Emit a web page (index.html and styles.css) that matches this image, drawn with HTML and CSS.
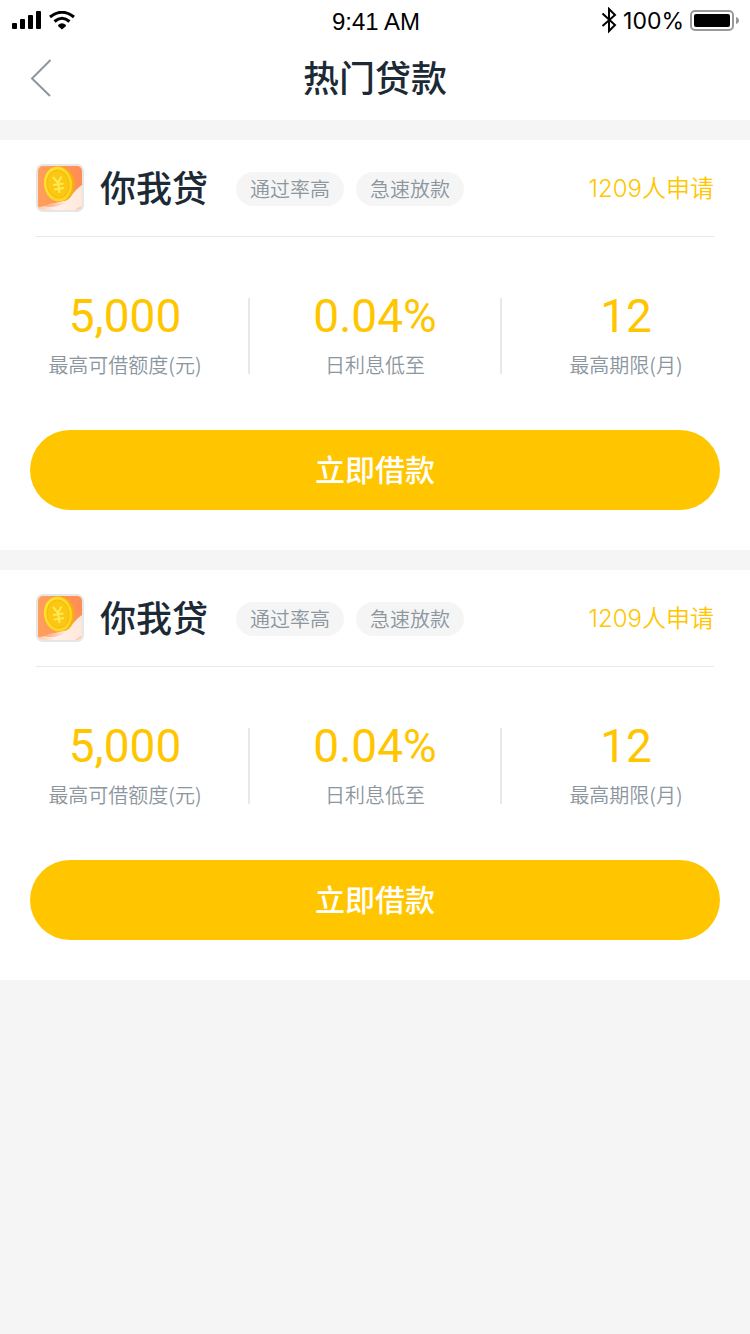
FILE: index.html
```html
<!DOCTYPE html>
<html lang="zh-CN">
<head>
<meta charset="utf-8">
<meta name="viewport" content="width=device-width, initial-scale=1">
<title>热门贷款</title>
<link rel="stylesheet" href="styles.css">
</head>
<body>
<svg class="defs" width="0" height="0" aria-hidden="true">
  <defs>
    <linearGradient id="sky" x1="0" y1="0" x2="1" y2="0">
      <stop offset="0" stop-color="#ffa05c"/><stop offset="1" stop-color="#ff8c54"/>
    </linearGradient>
    <linearGradient id="hill" x1="0" y1="0" x2="1" y2="0">
      <stop offset="0" stop-color="#ffc4a0"/><stop offset="0.4" stop-color="#fff2ea"/><stop offset="1" stop-color="#ffe6d9"/>
    </linearGradient>
    <linearGradient id="shade" x1="0" y1="0" x2="1" y2="0">
      <stop offset="0" stop-color="#ffa274"/><stop offset="1" stop-color="#ffeadf"/>
    </linearGradient>
    <linearGradient id="coin" x1="0" y1="0" x2="1" y2="1">
      <stop offset="0" stop-color="#ffe62c"/><stop offset="1" stop-color="#ffcf22"/>
    </linearGradient>
    <clipPath id="tile"><rect x="1" y="1" width="46" height="46" rx="5"/></clipPath>
    <symbol id="logo" viewBox="0 0 48 48">
      <g clip-path="url(#tile)">
        <rect width="48" height="48" fill="url(#sky)"/>
        <path d="M0 44C12 41 24 39 32 34C38 30 40 24 48 20V48H0Z" fill="url(#hill)"/>
        <path d="M8 42C14 39 22 38 30 38C24 43 14 44 8 42Z" fill="url(#shade)"/>
        <path d="M37 48C40 45 44 42 48 41V48Z" fill="#ffcdb3"/>
      </g>
      <ellipse cx="24.500" cy="20" rx="14" ry="17.500" transform="rotate(-8 24.500 20)" fill="#f7b10b"/>
      <ellipse cx="22" cy="20" rx="14" ry="17.500" transform="rotate(-8 22 20)" fill="url(#coin)"/>
      <ellipse cx="22" cy="20" rx="11" ry="14" transform="rotate(-8 22 20)" fill="#fcc614" stroke="#f5ba0e" stroke-width="1"/>
      <path d="M17 13L22 19L25.500 12.500M22 19L23.500 29M17 21L27.500 19.500M18 25.500L28 24" fill="none" stroke="#ffea50" stroke-width="2"/>
      <rect x="1" y="1" width="46" height="46" rx="6" fill="none" stroke="#e6e6e6" stroke-width="2"/>
    </symbol>
  </defs>
</svg>

<div class="status">
  <div class="status-side">
    <svg width="30" height="22" viewBox="0 0 30 22" aria-hidden="true">
      <rect x="0" y="12" width="5" height="6" rx="1"/><rect x="8" y="8" width="5" height="10" rx="1"/><rect x="16" y="4" width="5" height="14" rx="1"/><rect x="24" y="0" width="5" height="18" rx="1"/>
    </svg>
    <svg width="26" height="22" viewBox="0 0 26 22" aria-hidden="true">
      <g fill="none" stroke="#000" stroke-width="3"><path d="M1 6Q13 -3.500 25 6"/><path d="M5.500 10.500Q13 4 20.500 10.500"/></g>
      <path d="M9 14Q13 10.500 17 14L16.500 15.500L13 18.500L9.500 15.500Z"/>
    </svg>
  </div>
  <time class="clock">9:41 AM</time>
  <div class="status-side status-right">
    <svg width="16" height="30" viewBox="0 0 16 30" aria-hidden="true"><path d="M1.500 6.500L14 18L8 24V2L14 8L1.500 19" fill="none" stroke="#000" stroke-width="2"/></svg>
    <span class="percent">100%</span>
    <svg width="50" height="24" viewBox="0 0 50 24" aria-hidden="true">
      <rect x="1" y="1" width="42" height="19" rx="4" fill="none" stroke="#999" stroke-width="2"/><rect x="4" y="4" width="36" height="13" rx="2"/><path d="M46 7Q49 8 49 10.500T46 14Z" fill="#999"/>
    </svg>
  </div>
</div>

<header class="nav">
  <button class="back" type="button" aria-label="返回">
    <svg width="22" height="38" viewBox="0 0 22 38" aria-hidden="true"><path d="M20.500 1L2 19.500L20 37" fill="none" stroke="#8b969e" stroke-width="2"/></svg>
  </button>
  <h1 class="title">热门贷款</h1>
</header>

<main class="list">
  <article class="card">
    <div class="card-head">
      <svg class="logo" viewBox="0 0 48 48" aria-hidden="true"><use href="#logo"/></svg>
      <h2 class="name">你我贷</h2>
      <span class="tag">通过率高</span><span class="tag">急速放款</span>
      <span class="applied">1209人申请</span>
    </div>
    <dl class="stats">
      <div class="stat"><dd class="value">5,000</dd><dt class="label">最高可借额度(元)</dt></div>
      <div class="stat"><dd class="value">0.04%</dd><dt class="label">日利息低至</dt></div>
      <div class="stat"><dd class="value">12</dd><dt class="label">最高期限(月)</dt></div>
    </dl>
    <button class="apply" type="button">立即借款</button>
  </article>

  <article class="card">
    <div class="card-head">
      <svg class="logo" viewBox="0 0 48 48" aria-hidden="true"><use href="#logo"/></svg>
      <h2 class="name">你我贷</h2>
      <span class="tag">通过率高</span><span class="tag">急速放款</span>
      <span class="applied">1209人申请</span>
    </div>
    <dl class="stats">
      <div class="stat"><dd class="value">5,000</dd><dt class="label">最高可借额度(元)</dt></div>
      <div class="stat"><dd class="value">0.04%</dd><dt class="label">日利息低至</dt></div>
      <div class="stat"><dd class="value">12</dd><dt class="label">最高期限(月)</dt></div>
    </dl>
    <button class="apply" type="button">立即借款</button>
  </article>
</main>
</body>
</html>
```
FILE: styles.css
```css
* { box-sizing: border-box; }
body {
  margin: 0;
  background: #f5f5f5;
  color: #1c2a36;
  font-family: "Noto Sans CJK SC", sans-serif;
}
h1, h2, dl, dd { margin: 0; }
button { border: 0; font-family: inherit; cursor: pointer; }
svg { display: block; flex: none; }
.defs { position: absolute; }

.status {
  display: grid;
  grid-template-columns: 1fr auto 1fr;
  align-items: center;
  height: 40px;
  padding: 0 10px 0 12px;
  background: #fff;
  color: #000;
  font-family: "Liberation Sans", Arial, sans-serif;
}
.status-side { display: flex; align-items: center; gap: 7px; }
.status-right { justify-content: flex-end; gap: 6px; }
.clock { font-size: 24px; line-height: 44px; }
.percent { font-family: Inter, sans-serif; font-size: 23px; line-height: 28px; padding-bottom: 2px; }

.nav {
  display: grid;
  grid-template-columns: 80px 1fr 80px;
  align-items: center;
  height: 80px;
  background: #fff;
}
.back { height: 80px; padding: 0 0 4px 30px; background: none; }
.title { padding-bottom: 8px; font-size: 36px; line-height: 52px; font-weight: 500; text-align: center; }

.list { display: grid; gap: 20px; padding-top: 20px; }
.card { padding-bottom: 40px; background: #fff; }
.card-head {
  display: flex;
  align-items: center;
  height: 97px;
  margin: 0 36px;
  border-bottom: 1px solid #e8e8e8;
}
.logo { width: 48px; height: 48px; }
.name { margin: 0 28px 0 16px; padding-bottom: 4px; font-size: 36px; line-height: 52px; font-weight: 500; }
.tag {
  margin: 2px 12px 0 0;
  padding: 0 14px;
  border-radius: 17px;
  background: #f5f5f5;
  color: #8b969e;
  font-size: 20px;
  line-height: 34px;
  font-weight: 350;
}
.applied {
  margin-left: auto;
  padding-bottom: 4px;
  color: #ffc600;
  font-family: Inter, "Noto Sans CJK SC", sans-serif;
  font-size: 24px;
  font-weight: 350;
}

.stats { display: grid; grid-template-columns: repeat(3, 1fr); padding: 61px 0 56px; }
.stat { display: flex; flex-direction: column; height: 76px; text-align: center; }
.stat:first-child { padding-left: 2px; border-right: 2px solid #e8e8e8; }
.stat:last-child { border-left: 2px solid #e8e8e8; }
.value { color: #ffc600; font-family: Roboto, sans-serif; font-size: 46px; line-height: 36px; }
.label { margin-top: 16px; color: #8b969e; font-size: 20px; line-height: 30px; font-weight: 350; }

.apply {
  display: block;
  width: calc(100% - 60px);
  height: 80px;
  margin: 0 30px;
  padding: 0 0 4px;
  border-radius: 40px;
  background: #ffc600;
  color: #fff;
  font-size: 30px;
  font-weight: 500;
}
```
